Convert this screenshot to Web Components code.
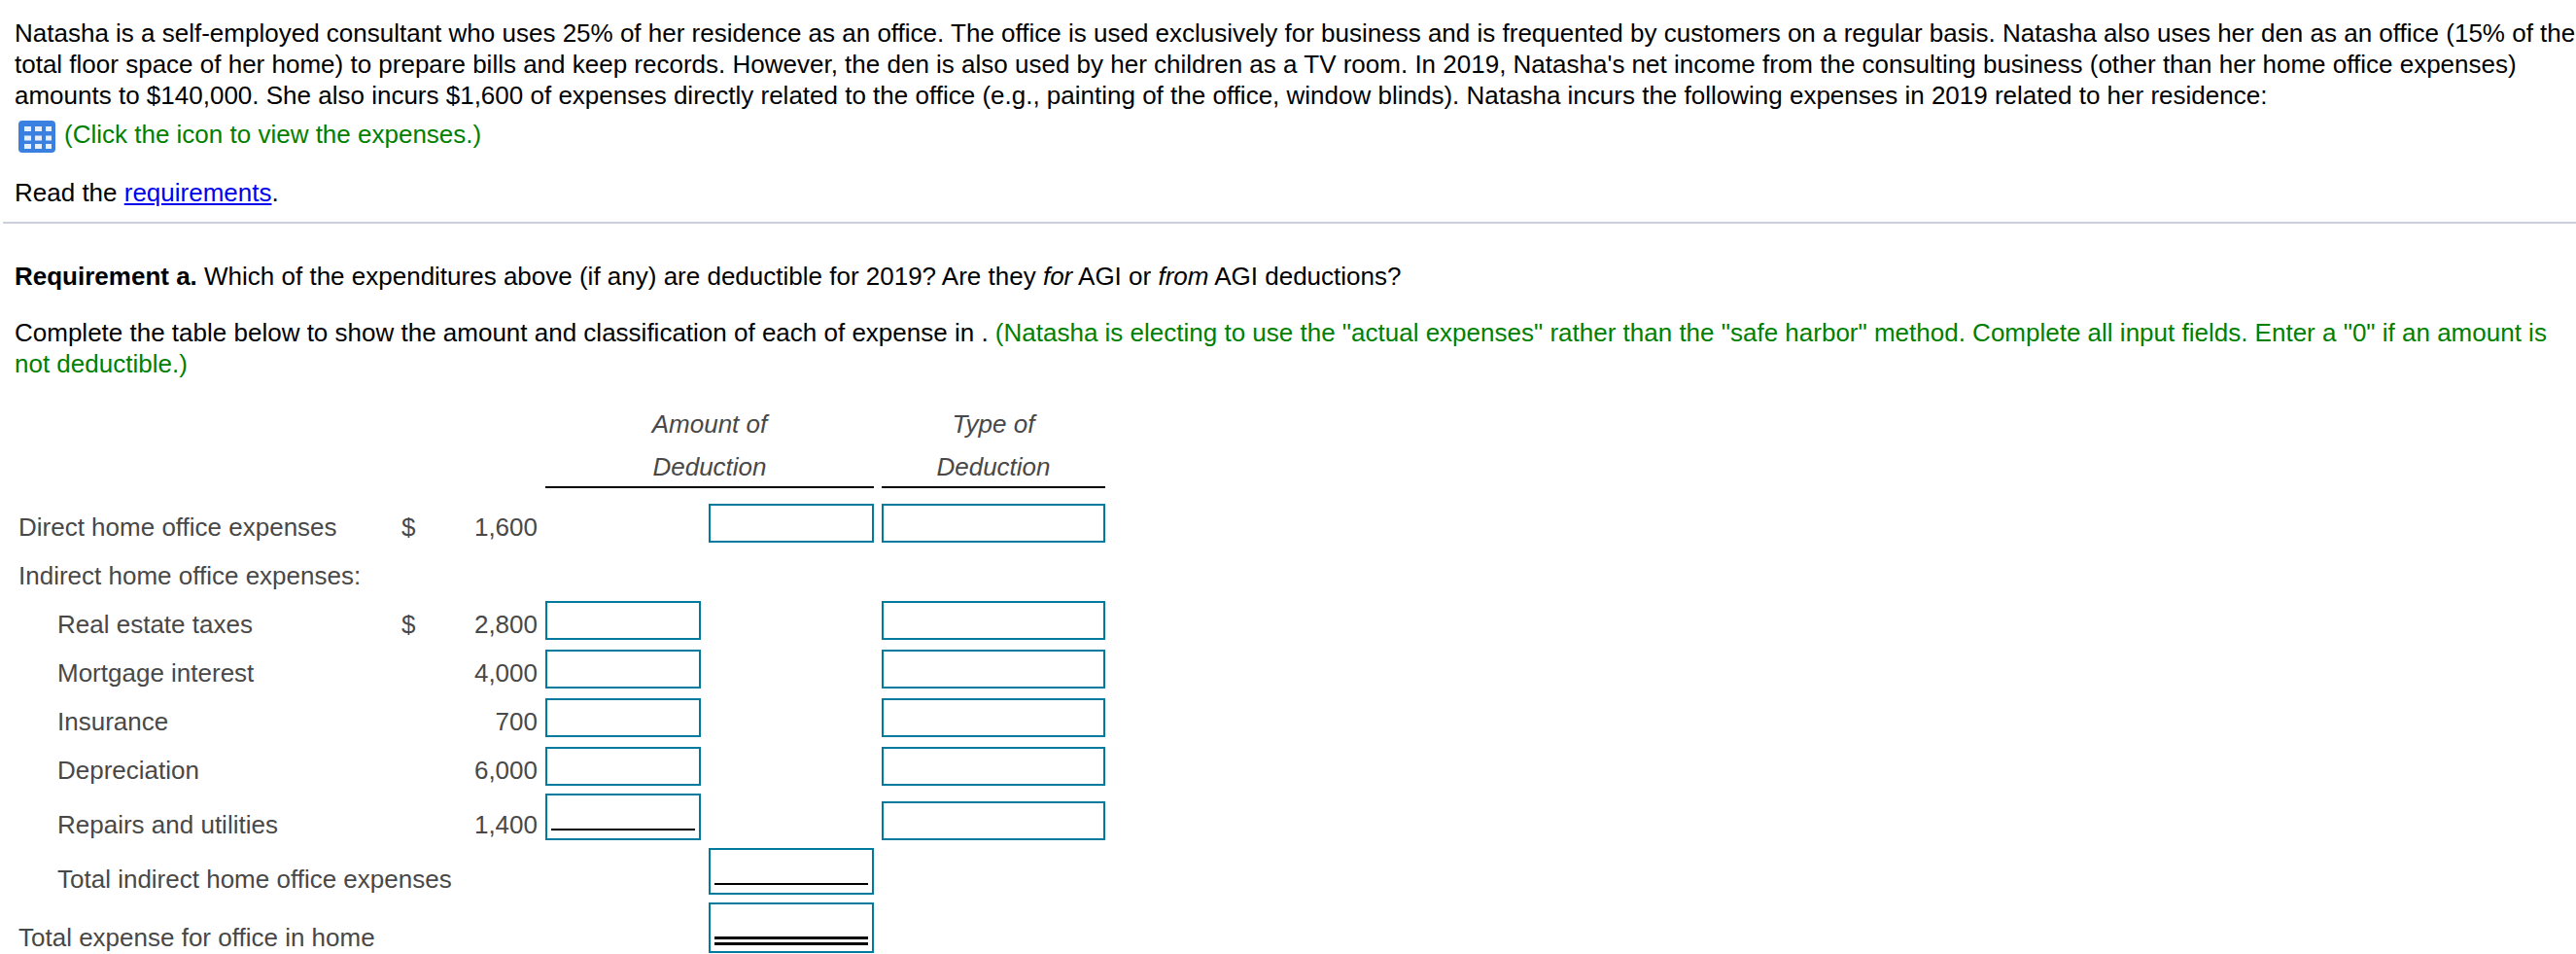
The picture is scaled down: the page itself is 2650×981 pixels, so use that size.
<!DOCTYPE html>
<html>
<head>
<meta charset="utf-8">
<title>Home office deduction</title>
<style>
  html, body { margin: 0; background: #fff; }
  body { font-family: "Liberation Sans", Arial, sans-serif; font-size: 26px; color: #000; overflow: hidden; }
</style>
</head>
<body>
<hw-question>
  <hw-prompt>
    <span slot="intro">Natasha is a self-employed consultant who uses 25% of her residence as an office. The office is used exclusively for business and is frequented by customers on a regular basis. Natasha also uses her den as an office (15% of the total floor space of her home) to prepare bills and keep records. However, the den is also used by her children as a TV room. In 2019, Natasha's net income from the consulting business (other than her home office expenses) amounts to $140,000. She also incurs $1,600 of expenses directly related to the office (e.g., painting of the office, window blinds). Natasha incurs the following expenses in 2019 related to her residence:</span>
    <span slot="hint">(Click the icon to view the expenses.)</span>
  </hw-prompt>
  <hw-requirement>
    <span slot="question"><b>Requirement a.</b> Which of the expenditures above (if any) are deductible for 2019? Are they <i>for</i> AGI or <i>from</i> AGI deductions?</span>
    <span slot="task">Complete the table below to show the amount and classification of each of expense in . <span style="color:#008000">(Natasha is electing to use the "actual expenses" rather than the "safe harbor" method. Complete all input fields. Enter a "0" if an amount is</span><br><span style="color:#008000">not deductible.)</span></span>
  </hw-requirement>
  <deduction-table>
    <deduction-row label="Direct home office expenses" sym="$" value="1,600" second type gap="10"></deduction-row>
    <deduction-row label="Indirect home office expenses:" gap="10"></deduction-row>
    <deduction-row label="Real estate taxes" indent sym="$" value="2,800" first type gap="10"></deduction-row>
    <deduction-row label="Mortgage interest" indent value="4,000" first type gap="10"></deduction-row>
    <deduction-row label="Insurance" indent value="700" first type gap="10"></deduction-row>
    <deduction-row label="Depreciation" indent value="6,000" first type gap="8"></deduction-row>
    <deduction-row label="Repairs and utilities" indent value="1,400" first="single" type height="48" gap="8"></deduction-row>
    <deduction-row label="Total indirect home office expenses" indent second="single" height="48" gap="8"></deduction-row>
    <deduction-row label="Total expense for office in home" second="double" height="52" gap="0"></deduction-row>
  </deduction-table>
</hw-question>

<script>
// Shared column layout for the table header and rows
const tableColumns = '395px 60px 88px 160px 8px 170px 8px 230px';

class HwQuestion extends HTMLElement {
  constructor() {
    super();
    this.attachShadow({ mode: 'open' });
    this.shadowRoot.innerHTML = `
      <style>
        :host { display: flex; flex-direction: column; width: 2650px; height: 981px; overflow: hidden; }
      </style>
      <slot></slot>
    `;
  }
}

class HwPrompt extends HTMLElement {
  constructor() {
    super();
    this.attachShadow({ mode: 'open' });
    this.shadowRoot.innerHTML = `
      <style>
        :host { display: block; flex: none; margin-left: 3px; padding: 18px 0 0 12px; height: 210px; line-height: 32px; border-bottom: 2px solid #ccd0dd; }
        .intro { width: 2635px; }
        .hint { display: flex; align-items: center; gap: 9px; height: 34px; margin: 7px 0 0 4px; color: #008000; }
        svg { display: block; margin-top: 5px; }
        .read { margin-top: 27px; }
        a { color: #0000ee; text-decoration: underline; }
      </style>
      <div class="intro"><slot name="intro"></slot></div>
      <div class="hint">
        <svg width="38" height="33" viewBox="0 0 38 33">
          <rect width="38" height="33" rx="4" fill="#3a80e0"/>
          <g fill="#e6effb">
            <rect x="6" y="6" width="7" height="5"/><rect x="17" y="6" width="7" height="5"/><rect x="28" y="6" width="6" height="5"/>
            <rect x="6" y="15.5" width="7" height="5"/><rect x="17" y="15.5" width="7" height="5"/><rect x="28" y="15.5" width="6" height="5"/>
            <rect x="6" y="24" width="7" height="5"/><rect x="17" y="24" width="7" height="5"/><rect x="28" y="24" width="6" height="5"/>
          </g>
        </svg>
        <slot name="hint"></slot>
      </div>
      <div class="read">Read the <a href="#">requirements</a>.</div>
    `;
  }
}

class HwRequirement extends HTMLElement {
  constructor() {
    super();
    this.attachShadow({ mode: 'open' });
    this.shadowRoot.innerHTML = `
      <style>
        :host { display: block; flex: none; padding: 38px 0 0 15px; line-height: 32px; }
        .task { margin-top: 26px; width: 2626px; }
      </style>
      <div><slot name="question"></slot></div>
      <div class="task"><slot name="task"></slot></div>
    `;
  }
}

class DeductionTable extends HTMLElement {
  constructor() {
    super();
    this.attachShadow({ mode: 'open' });
    this.shadowRoot.innerHTML = `
      <style>
        :host { display: block; flex: none; margin: 24px 0 0 18px; color: #484848; }
        .head { display: grid; grid-template-columns: ${tableColumns}; margin-bottom: 16px; font-style: italic; text-align: center; line-height: 44px; }
        .amount, .type { height: 88px; box-sizing: border-box; border-bottom: 2px solid #000; }
        .amount { grid-column: 4 / 7; }
        .type { grid-column: 8; }
      </style>
      <div class="head">
        <div class="amount">Amount of<br>Deduction</div>
        <div class="type">Type of<br>Deduction</div>
      </div>
      <slot></slot>
    `;
  }
}

class DeductionRow extends HTMLElement {
  constructor() {
    super();
    this.attachShadow({ mode: 'open' });
  }
  connectedCallback() {
    const box = (name) => {
      if (!this.hasAttribute(name)) return '<div></div>';
      const rule = this.getAttribute(name);
      return `<answer-box${rule ? ` rule="${rule}"` : ''}></answer-box>`;
    };
    const height = this.getAttribute('height') || '40';
    this.shadowRoot.innerHTML = `
      <style>
        :host { display: grid; grid-template-columns: ${tableColumns}; align-items: end; height: ${height}px; margin-bottom: ${this.getAttribute('gap') || 0}px; line-height: 32px; }
        .label { padding-left: ${this.hasAttribute('indent') ? 41 : 1}px; white-space: nowrap; }
        .value { text-align: right; padding-right: 8px; }
      </style>
      <div class="label">${this.getAttribute('label') || ''}</div>
      <div>${this.getAttribute('sym') || ''}</div>
      <div class="value">${this.getAttribute('value') || ''}</div>
      ${box('first')}
      <div></div>
      ${box('second')}
      <div></div>
      ${box('type')}
    `;
  }
}

class AnswerBox extends HTMLElement {
  constructor() {
    super();
    this.attachShadow({ mode: 'open' });
  }
  connectedCallback() {
    const rule = this.getAttribute('rule');
    let line = '';
    if (rule === 'single') line = '<div class="line"></div>';
    if (rule === 'double') line = '<div class="line dbl"></div>';
    this.shadowRoot.innerHTML = `
      <style>
        :host { display: flex; flex-direction: column; justify-content: flex-end; height: ${{ single: 48, double: 52 }[rule] || 40}px; box-sizing: border-box; border: 2px solid #007b9e; padding: 0 4px; }
        .line { height: 2px; background: #000; margin-bottom: 8px; }
        .dbl { height: 3px; border-top: 3px solid #000; border-bottom: 3px solid #000; background: #fff; margin-bottom: 6px; }
      </style>
      ${line}
    `;
  }
}

customElements.define('hw-question', HwQuestion);
customElements.define('hw-prompt', HwPrompt);
customElements.define('hw-requirement', HwRequirement);
customElements.define('deduction-table', DeductionTable);
customElements.define('deduction-row', DeductionRow);
customElements.define('answer-box', AnswerBox);
</script>
</body>
</html>
